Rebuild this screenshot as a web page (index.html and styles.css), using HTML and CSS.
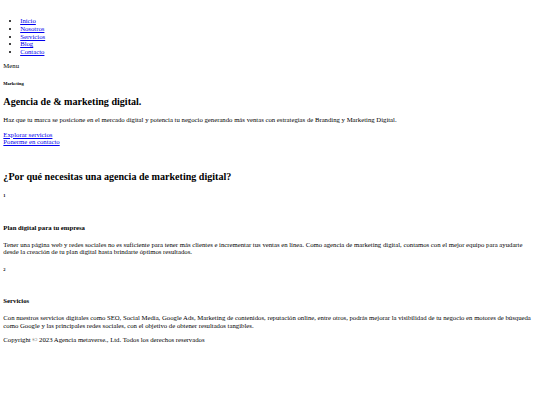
FILE: index.html
```html
<!DOCTYPE html>
<html lang="es">
<head>
<meta charset="utf-8">
<title>Agencia metaverse</title>
<link rel="stylesheet" href="styles.css">
</head>
<body>
<header class="site-header">
  <nav class="nav">
    <ul class="nav-list">
      <li><a href="#">Inicio</a></li>
      <li><a href="#">Nosotros</a></li>
      <li><a href="#">Servicios</a></li>
      <li><a href="#">Blog</a></li>
      <li><a href="#">Contacto</a></li>
    </ul>
    <div class="menu-toggle">Menu</div>
  </nav>
</header>
<main>
  <section class="hero">
    <h6 class="eyebrow">Marketing</h6>
    <h1 class="hero-title">Agencia de &amp; marketing digital.</h1>
    <p class="text">Haz que tu marca se posicione en el mercado digital y potencia tu negocio generando más ventas con estrategias de Branding y Marketing Digital.</p>
    <div class="hero-links">
      <a href="#">Explorar servicios</a><br>
      <a href="#">Ponerme en contacto</a>
    </div>
  </section>
  <section class="why">
    <h2 class="why-title">¿Por qué necesitas una agencia de marketing digital?</h2>
    <div class="card">
      <h6 class="card-num">1</h6>
      <div class="card-icon"></div>
      <h4 class="card-title">Plan digital para tu empresa</h4>
      <p class="text">Tener una página web y redes sociales no es suficiente para tener más clientes e incrementar tus ventas en línea. Como agencia de marketing digital, contamos con el mejor equipo para ayudarte desde la creación de tu plan digital hasta brindarte óptimos resultados.</p>
    </div>
    <div class="card">
      <h6 class="card-num">2</h6>
      <div class="card-icon"></div>
      <h4 class="card-title">Servicios</h4>
      <p class="text">Con nuestros servicios digitales como SEO, Social Media, Google Ads, Marketing de contenidos, reputación online, entre otros, podrás mejorar la visibilidad de tu negocio en motores de búsqueda como Google y las principales redes sociales, con el objetivo de obtener resultados tangibles.</p>
    </div>
  </section>
</main>
<footer class="footer">
  <p class="text">Copyright © 2023 Agencia metaverse., Ltd. Todos los derechos reservados</p>
</footer>
</body>
</html>
```

FILE: styles.css
```css
html {
  background: #ffffff;
}
body {
  margin: 3.36px;
  font-family: "Liberation Serif", "Times New Roman", serif;
  font-size: 6.72px;
  line-height: 1.15;
  color: #000000;
}
a {
  color: #0000ee;
}
.site-header {
  padding-top: 7px;
}
.nav-list {
  margin: 1em 0;
  padding-left: 2.5em;
}
.eyebrow {
  font-size: 0.67em;
  margin: 2.33em 0;
}
.hero-title {
  font-size: 1.5em;
  margin: 0.83em 0;
}
.text {
  margin: 1em 0;
}
.why {
  padding-top: 16.8px;
}
.why-title {
  font-size: 1.5em;
  margin: 0.83em 0;
}
.card-num {
  font-size: 0.67em;
  margin: 2.33em 0;
}
.card-icon {
  height: 6.2px;
}
.card-title {
  font-size: 1em;
  margin: 1.33em 0;
}
```
